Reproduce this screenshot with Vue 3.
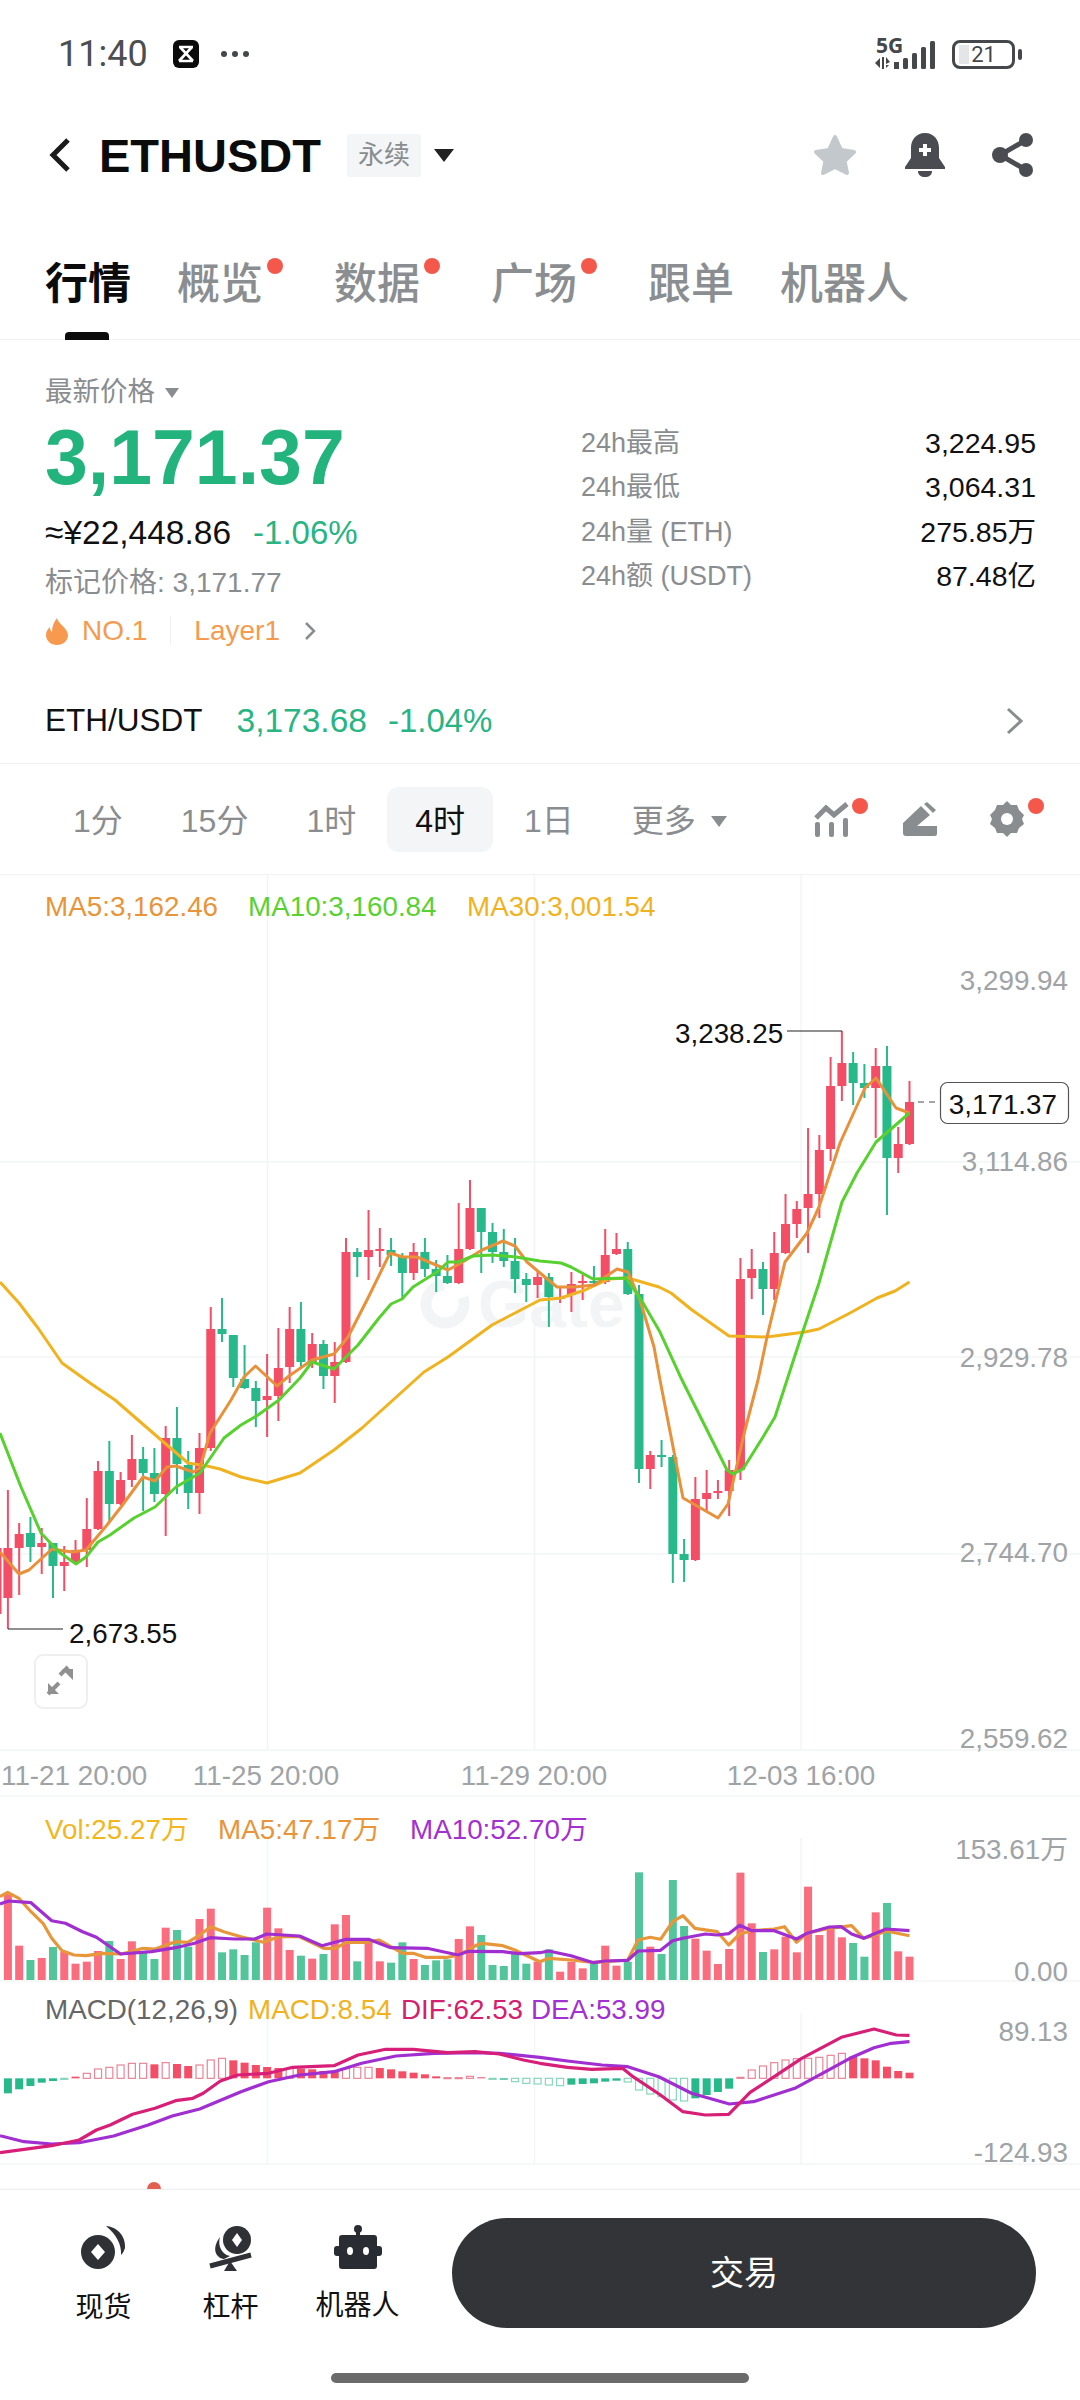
<template>
  <div class="page">
    <!-- status bar -->
    <div class="status">
      <span class="clock">11:40</span>
      <svg class="capcut" width="26" height="28" viewBox="0 0 26 28">
        <rect width="26" height="28" rx="6" fill="#0b0b0b" />
        <path d="M6 7h14M6 21h14M7 7l13 14M19 7L6 21" stroke="#fff" stroke-width="2.6" fill="none" />
      </svg>
      <span class="dots"><i></i><i></i><i></i></span>
      <div class="status-right">
        <svg class="signal" width="64" height="32" viewBox="0 0 64 32">
          <text class="net" x="1" y="15">5G</text>
          <path d="M0 25l5-5v10zM7 19h2v12H7zM11 19l4 5-4 2zM11 27h3l-3 3z" fill="#45474b" />
          <rect x="19" y="24" width="5" height="7" fill="#45474b" />
          <rect x="28" y="20" width="5" height="11" rx="1.5" fill="#45474b" />
          <rect x="37" y="15" width="5" height="16" rx="1.5" fill="#45474b" />
          <rect x="46" y="9" width="5" height="22" rx="1.5" fill="#45474b" />
          <rect x="55" y="3" width="5" height="28" rx="1.5" fill="#45474b" />
        </svg>
        <div class="battery"><b class="battery-fill"></b><span>21</span></div>
        <i class="battery-nub"></i>
      </div>
    </div>

    <!-- symbol header -->
    <div class="header">
      <svg class="back" width="24" height="36" viewBox="0 0 24 36">
        <path d="M20 3L5 18l15 15" stroke="#1b1b1b" stroke-width="5" fill="none" />
      </svg>
      <span class="symbol">ETHUSDT</span>
      <span class="tag">永续</span>
      <i class="tri tri-dark"></i>
      <div class="header-icons">
        <svg width="46" height="44" viewBox="0 0 46 44">
          <path d="M23 4l6 13 13 2-9.500 9 2.500 12-12-6-12 6 2.500-12L4 19l13-2z" fill="#c3c8cc" stroke="#c3c8cc" stroke-width="4" stroke-linejoin="round" />
        </svg>
        <svg width="40" height="44" viewBox="0 0 40 44">
          <path d="M20 0C11 0 6 7 6 15v10L0 34v2h40v-2l-6-9V15C34 7 29 0 20 0z" fill="#4a4c52" />
          <path d="M13 38h14c0 4-3 6-7 6s-7-2-7-6z" fill="#4a4c52" />
          <path d="M20 11v12M14 17h12" stroke="#fff" stroke-width="4" />
        </svg>
        <svg width="42" height="44" viewBox="0 0 42 44">
          <path d="M34 7L8 22l26 15" stroke="#4a4c52" stroke-width="5" fill="none" />
          <circle cx="34" cy="7" r="7" fill="#4a4c52" />
          <circle cx="8" cy="22" r="8" fill="#4a4c52" />
          <circle cx="34" cy="37" r="7" fill="#4a4c52" />
        </svg>
      </div>
    </div>

    <!-- section tabs -->
    <div class="tabs">
      <div v-for="t in tabs" :key="t.name" class="tab" :class="{ active: t.active, dotted: t.dot }">
        {{ t.name }}
        <i v-if="t.dot" class="tab-dot"></i>
      </div>
    </div>

    <!-- price block -->
    <div class="stats">
      <div class="stats-left">
        <div class="latest">最新价格 <i class="tri tri-small"></i></div>
        <div class="price">3,171.37</div>
        <div class="cny">≈¥22,448.86<span class="change">-1.06%</span></div>
        <div class="mark">标记价格: 3,171.77</div>
        <div class="rank">
          <svg width="24" height="27" viewBox="0 0 24 27">
            <path d="M12 0c1 6 10 9 11 17 0 6-5 10-11 10S1 23 1 17c0-4 2-6 4-8 0 3 1 4 2 5 0-6 2-10 5-14z" fill="#f7994f" />
          </svg>
          <span>NO.1</span>
          <i class="rank-line"></i>
          <span>Layer1</span>
          <svg class="rank-arrow" width="13" height="20" viewBox="0 0 13 20">
            <path d="M2 2l8 8-8 8" stroke="#8a8d90" stroke-width="2.500" fill="none" />
          </svg>
        </div>
      </div>
      <div class="stats-right">
        <div v-for="s in dayStats" :key="s.label" class="stat-row">
          <span class="stat-label">{{ s.label }}</span>
          <span class="stat-value">{{ s.value }}</span>
        </div>
      </div>
    </div>

    <!-- spot pair row -->
    <div class="pair">
      <span class="pair-name">ETH/USDT</span>
      <span class="pair-price">3,173.68</span>
      <span class="pair-change">-1.04%</span>
      <svg class="pair-arrow" width="18" height="28" viewBox="0 0 18 28">
        <path d="M2 2l13 12L2 26" stroke="#8a8d90" stroke-width="3" fill="none" />
      </svg>
    </div>

    <!-- period selector -->
    <div class="periods">
      <span v-for="p in periods" :key="p" class="period" :class="{ current: p === '4时' }">{{ p }}</span>
      <span class="period more">更多 <i class="tri tri-grey"></i></span>
      <div class="period-icons">
        <div class="icon-wrap">
          <svg width="36" height="36" viewBox="0 0 36 36">
            <path d="M2 17l10-10 8 7L33 3" stroke="#8a8d90" stroke-width="5" fill="none" />
            <rect x="1" y="21" width="5" height="15" rx="2" fill="#8a8d90" />
            <rect x="15" y="21" width="5" height="15" rx="2" fill="#8a8d90" />
            <rect x="29" y="17" width="5" height="19" rx="2" fill="#8a8d90" />
          </svg>
          <i class="badge"></i>
        </div>
        <svg width="34" height="34" viewBox="0 0 34 34">
          <path d="M0 21L18 4l9 9-13 11h20v8a2 2 0 0 1-2 2H3a3 3 0 0 1-3-3z" fill="#8a8d90" />
          <path d="M21 2l3-2 9 8-3 3z" fill="#8a8d90" />
        </svg>
        <div class="icon-wrap">
          <svg width="34" height="36" viewBox="0 0 34 36">
            <path d="M17 0l4 4h6l2 5 5 5-2 4 2 5-5 4-2 5h-6l-4 4-4-4H7l-2-5-5-4 2-5-2-4 5-5 2-5h6z" fill="#8a8d90" />
            <circle cx="17" cy="18" r="6" fill="#fff" />
          </svg>
          <i class="badge badge-gear"></i>
        </div>
      </div>
    </div>

    <!-- candlestick, volume and macd panes share one canvas in page coordinates -->
    <svg class="chart" width="1080" height="1315" viewBox="0 875 1080 1315">
      <g stroke="#f3f4f5" stroke-width="1.500">
        <line v-for="y in gridRows" :key="y" x1="0" x2="1080" :y1="y" :y2="y" />
        <template v-for="x in gridCols" :key="x">
          <line :x1="x" :x2="x" y1="875" y2="1750" />
          <line :x1="x" :x2="x" y1="1838" y2="1981" />
          <line :x1="x" :x2="x" y1="2013" y2="2164" />
        </template>
      </g>

      <!-- watermark -->
      <circle cx="445" cy="1304" r="19" fill="none" stroke="#f3f4f5" stroke-width="11" stroke-dasharray="95 24" transform="rotate(-20 445 1304)" />
      <text class="watermark" x="478" y="1327">Gate</text>

      <!-- candles -->
      <g v-for="c in candles" :key="c.i" :fill="c.fill">
        <rect :x="c.x - 1" :y="c.wickTop" width="2" :height="c.wickH" />
        <rect :x="c.x - 4.500" :y="c.top" width="9" :height="c.h" />
      </g>
      <rect x="0" y="1548" width="1.500" height="66" fill="#f44d66" />

      <polyline class="line" stroke="#f0b31f" :points="ma30" />
      <polyline class="line" stroke="#e8913a" :points="ma5" />
      <polyline class="line" stroke="#57d12f" :points="ma10" />

      <!-- price extremes -->
      <path d="M787 1031h55M8 1629h55" stroke="#222" stroke-width="1.200" fill="none" />
      <text class="t dark" x="675" y="1033">3,238.25</text>
      <text class="t dark" x="69" y="1633">2,673.55</text>
      <path d="M918 1102h18" stroke="#888" stroke-width="1.500" stroke-dasharray="6 5" />
      <rect x="940.500" y="1082.500" width="128" height="41" rx="7" fill="#fff" stroke="#555" stroke-width="1.200" />
      <text class="t dark end" x="1057" y="1104">3,171.37</text>

      <!-- expand button -->
      <rect x="35" y="1655" width="52" height="53" rx="8" fill="#fff" stroke="#efefef" stroke-width="2" />
      <path d="M60 1675l8-8M48 1694l11-11" stroke="#909090" stroke-width="4" />
      <path d="M62 1669h11v11zM48 1683v11h11z" fill="#909090" />

      <!-- legends -->
      <text class="t" x="45" y="906" fill="#e8953a">MA5:3,162.46</text>
      <text class="t" x="248" y="906" fill="#5ad132">MA10:3,160.84</text>
      <text class="t" x="467" y="906" fill="#f0b31f">MA30:3,001.54</text>

      <text v-for="a in axisLabels" :key="a.text" class="t end" x="1068" :y="a.y" fill="#a0a3a6">{{ a.text }}</text>
      <text v-for="d in dateLabels" :key="d.text" class="t" :class="d.cls" :x="d.x" y="1775" fill="#a0a3a6">{{ d.text }}</text>

      <!-- volume pane -->
      <text class="t" x="45" y="1829" fill="#f2b61f">Vol:25.27万</text>
      <text class="t" x="218" y="1829" fill="#e8953a">MA5:47.17万</text>
      <text class="t" x="410" y="1829" fill="#a330d0">MA10:52.70万</text>
      <rect v-for="b in volBars" :key="b.i" :x="b.x" :y="b.y" width="8" :height="b.h" :fill="b.fill" />
      <polyline class="line thick" stroke="#e8963a" :points="volMa5" />
      <polyline class="line thick" stroke="#a02ed0" :points="volMa10" />

      <!-- macd pane -->
      <text class="t" x="45" y="2009" fill="#666">MACD(12,26,9)</text>
      <text class="t" x="248" y="2009" fill="#f0b31f">MACD:8.54</text>
      <text class="t" x="401" y="2009" fill="#d4206f">DIF:62.53</text>
      <text class="t" x="531" y="2009" fill="#a330d0">DEA:53.99</text>
      <template v-for="b in macdBars" :key="b.i">
        <rect v-if="b.solid" :x="b.x" :y="b.y" width="8" :height="b.h" :fill="b.color" />
        <rect v-else :x="b.x + 0.500" :y="b.y" width="7" :height="b.h" fill="none" :stroke="b.edge" stroke-width="1.200" />
      </template>
      <polyline class="line thick" stroke="#a02ed0" :points="dea" />
      <polyline class="line thick" stroke="#d81f78" :points="dif" />

      <line x1="0" x2="1080" y1="2189.500" y2="2189.500" stroke="#eeeff0" stroke-width="1.500" />
      <path d="M147 2189a7 7 0 0 1 14 0z" fill="#e2604f" />
    </svg>

    <!-- bottom actions -->
    <div class="footer">
      <div class="actions">
        <div class="action">
          <svg width="46" height="46" viewBox="0 0 46 46">
            <circle cx="17" cy="27" r="17" fill="#2f3136" />
            <path d="M17 19l7 8-7 8-7-8z" fill="#fff" />
            <path d="M25 1c12 1 20 11 19 22-1 3-2 5-4 7 1-10-5-21-15-29z" fill="#2f3136" />
          </svg>
          <span>现货</span>
        </div>
        <div class="action">
          <svg width="46" height="46" viewBox="0 0 46 46">
            <circle cx="29" cy="15" r="14" fill="#2f3136" />
            <path d="M29 8l5 7-5 7-5-7z" fill="#fff" />
            <path d="M12 12c-1 3-1 7 0 10 2 5 5 8 10 9l-6 3C8 33 3 24 12 12z" fill="#2f3136" />
            <path d="M2 41l41-11" stroke="#2f3136" stroke-width="5" />
            <path d="M16 46l6-10 7 10z" fill="#2f3136" />
          </svg>
          <span>杠杆</span>
        </div>
        <div class="action">
          <svg width="48" height="44" viewBox="0 0 48 44">
            <circle cx="24" cy="4" r="4" fill="#2a2c33" />
            <rect x="22" y="6" width="4" height="6" fill="#2a2c33" />
            <rect x="5" y="10" width="38" height="34" rx="3" fill="#2a2c33" />
            <rect x="0" y="21" width="48" height="10" rx="3" fill="#2a2c33" />
            <ellipse cx="16" cy="26" rx="3" ry="4" fill="#fff" />
            <ellipse cx="32" cy="26" rx="3" ry="4" fill="#fff" />
          </svg>
          <span>机器人</span>
        </div>
        <div class="trade">交易</div>
      </div>
      <div class="home-bar"></div>
    </div>
  </div>
</template>

<script setup>
const tabs = [
  { name: '行情', active: true },
  { name: '概览', dot: true },
  { name: '数据', dot: true },
  { name: '广场', dot: true },
  { name: '跟单' },
  { name: '机器人' }
]

const dayStats = [
  { label: '24h最高', value: '3,224.95' },
  { label: '24h最低', value: '3,064.31' },
  { label: '24h量 (ETH)', value: '275.85万' },
  { label: '24h额 (USDT)', value: '87.48亿' }
]

const periods = ['1分', '15分', '1时', '4时', '1日']

const gridRows = [1162, 1357, 1554, 1750, 1796, 1981, 2164]
const gridCols = [267.5, 534.5, 801]

const axisLabels = [
  { text: '3,299.94', y: 980 },
  { text: '3,114.86', y: 1161 },
  { text: '2,929.78', y: 1357 },
  { text: '2,744.70', y: 1552 },
  { text: '2,559.62', y: 1738 },
  { text: '153.61万', y: 1849 },
  { text: '0.00', y: 1971 },
  { text: '89.13', y: 2031 },
  { text: '-124.93', y: 2152 }
]

const dateLabels = [
  { text: '11-21 20:00', x: 1 },
  { text: '11-25 20:00', x: 266, cls: 'mid' },
  { text: '11-29 20:00', x: 534, cls: 'mid' },
  { text: '12-03 16:00', x: 801, cls: 'mid' }
]

const candleX = (i) => 7.9 + 11.27 * i

// colour, wick top, body top, body bottom, wick bottom (page y)
const rawCandles = [
  ['r', 1490, 1548, 1598, 1629], ['r', 1523, 1534, 1548, 1595], ['g', 1517, 1533, 1547, 1562], ['r', 1528, 1543, 1547, 1574],
  ['g', 1543, 1543, 1566, 1598], ['r', 1546, 1562, 1566, 1591], ['r', 1540, 1550, 1562, 1563], ['r', 1498, 1529, 1550, 1567],
  ['r', 1461, 1471, 1529, 1530], ['g', 1441, 1471, 1504, 1522], ['r', 1472, 1480, 1504, 1505], ['r', 1435, 1459, 1480, 1487],
  ['g', 1447, 1459, 1473, 1511], ['g', 1448, 1473, 1494, 1502], ['r', 1426, 1438, 1494, 1536], ['g', 1407, 1438, 1464, 1494],
  ['g', 1451, 1465, 1493, 1509], ['r', 1433, 1448, 1493, 1514], ['r', 1307, 1329, 1448, 1451], ['g', 1298, 1329, 1334, 1342],
  ['g', 1335, 1335, 1378, 1387], ['g', 1345, 1379, 1388, 1389], ['g', 1381, 1388, 1401, 1427], ['r', 1354, 1396, 1400, 1437],
  ['r', 1328, 1368, 1396, 1421], ['r', 1307, 1329, 1367, 1383], ['g', 1302, 1329, 1362, 1368], ['r', 1333, 1344, 1362, 1368],
  ['g', 1340, 1344, 1376, 1389], ['r', 1342, 1362, 1376, 1403], ['r', 1238, 1252, 1362, 1363], ['g', 1248, 1252, 1257, 1277],
  ['r', 1210, 1250, 1257, 1280], ['r', 1228, 1249, 1250, 1267], ['g', 1238, 1250, 1255, 1266], ['g', 1253, 1257, 1273, 1300],
  ['r', 1243, 1252, 1273, 1280], ['g', 1238, 1252, 1269, 1277], ['g', 1260, 1269, 1276, 1292], ['g', 1255, 1276, 1283, 1284],
  ['r', 1203, 1249, 1283, 1284], ['r', 1180, 1208, 1249, 1250], ['g', 1208, 1208, 1232, 1273], ['g', 1223, 1232, 1252, 1263],
  ['g', 1229, 1252, 1261, 1267], ['g', 1238, 1261, 1279, 1293], ['g', 1273, 1279, 1285, 1302], ['r', 1270, 1277, 1285, 1298],
  ['g', 1273, 1277, 1297, 1327], ['r', 1288, 1297, 1299, 1303], ['r', 1272, 1284, 1295, 1312], ['r', 1275, 1281, 1283, 1300],
  ['g', 1266, 1281, 1283, 1286], ['r', 1229, 1255, 1282, 1284], ['r', 1233, 1249, 1254, 1255], ['g', 1242, 1249, 1294, 1295],
  ['g', 1285, 1294, 1469, 1483], ['r', 1451, 1455, 1469, 1489], ['g', 1440, 1455, 1457, 1467], ['g', 1455, 1457, 1554, 1583],
  ['g', 1539, 1554, 1560, 1582], ['r', 1477, 1499, 1560, 1561], ['r', 1470, 1493, 1499, 1512], ['r', 1480, 1491, 1493, 1499],
  ['r', 1460, 1470, 1491, 1516], ['r', 1258, 1279, 1470, 1480], ['r', 1249, 1269, 1278, 1299], ['g', 1262, 1269, 1289, 1315],
  ['r', 1232, 1253, 1289, 1300], ['r', 1194, 1224, 1253, 1254], ['r', 1201, 1209, 1224, 1238], ['r', 1128, 1194, 1208, 1253],
  ['r', 1135, 1150, 1194, 1218], ['r', 1057, 1086, 1149, 1161], ['r', 1031, 1063, 1086, 1101], ['g', 1052, 1063, 1083, 1105],
  ['g', 1064, 1083, 1088, 1098], ['r', 1048, 1066, 1088, 1138], ['g', 1046, 1066, 1158, 1215], ['r', 1127, 1144, 1158, 1173],
  ['r', 1081, 1102, 1144, 1145]
]

const candles = rawCandles.map((c, i) => ({
  i,
  x: candleX(i),
  fill: c[0] === 'r' ? '#f44d66' : '#27b98a',
  wickTop: c[1],
  wickH: c[4] - c[1],
  top: c[2],
  h: Math.max(c[3] - c[2], 2)
}))

const pts = (list) => list.map((p) => p.join(',')).join(' ')

const ma30 = pts([
  [0, 1282], [19, 1303], [38, 1328], [62, 1363], [90, 1383], [115, 1400], [160, 1439], [188, 1463], [207, 1466], [220, 1469],
  [241, 1477], [267, 1483], [300, 1473], [334, 1450], [362, 1428], [393, 1400], [424, 1372], [448, 1357], [492, 1325], [540, 1300],
  [561, 1298], [585, 1290], [609, 1279], [628, 1278], [659, 1287], [671, 1293], [692, 1310], [729, 1336], [767, 1337], [805, 1332],
  [819, 1329], [850, 1313], [877, 1298], [895, 1291], [909.5, 1282]
])

const ma5 = pts([
  [0, 1552], [19, 1574], [29, 1570], [52, 1549], [72, 1552], [86, 1550], [107, 1525], [121, 1507], [143, 1477], [155, 1481],
  [167, 1467], [176, 1466], [193, 1472], [200, 1468], [210, 1433], [231, 1400], [244, 1377], [255.5, 1366], [277, 1386], [289, 1376],
  [312, 1360], [334, 1354], [348, 1337], [368, 1298], [390, 1253], [403, 1257], [417, 1257], [448, 1270], [461, 1263], [482, 1250],
  [503, 1241], [515, 1246], [527, 1262], [540, 1273], [557, 1287], [574, 1287], [595, 1285], [605, 1277], [617, 1269], [628, 1272],
  [640, 1300], [654, 1347], [660, 1380], [683, 1498], [718, 1518], [728, 1504], [745, 1430], [758, 1380], [767, 1337], [785, 1262],
  [807, 1233], [819, 1207], [840, 1143], [865, 1088], [876, 1078], [896, 1108], [909.5, 1113]
])

const ma10 = pts([
  [0, 1433], [21, 1487], [41, 1533], [59, 1552], [76, 1564], [86, 1557], [98, 1542], [110, 1535], [134, 1518], [155, 1507],
  [176, 1487], [200, 1473], [224, 1438], [241, 1425], [258, 1415], [279, 1400], [300, 1378], [312, 1362], [334, 1369], [358, 1345],
  [379, 1318], [391, 1304], [402, 1299], [413, 1287], [437, 1272], [448, 1262], [458, 1262], [473, 1256], [492, 1255], [516, 1257],
  [540, 1261], [561, 1263], [571, 1267], [593, 1279], [626, 1278], [643, 1303], [660, 1332], [682, 1380], [727, 1470], [733, 1474],
  [743, 1469], [763, 1437], [775, 1417], [787, 1380], [800, 1340], [819, 1283], [842, 1202], [857, 1173], [876, 1142], [909.5, 1113]
])

// lower panes were read as offsets from y=1780 at 3x
const paneY = (v) => 1780 + v / 3
const left = (u) => u / 2.904
const right = (u) => 540 + u / 2.904
const trace = (a, b) => pts([
  ...a.map(([u, v]) => [+left(u).toFixed(1), +paneY(v).toFixed(1)]),
  ...b.map(([u, v]) => [+right(u).toFixed(1), +paneY(v).toFixed(1)])
])

const volTops = [
  340, 497, 540, 534, 501, 515, 551, 545, 513, 483, 537, 484, 515, 537, 443, 450, 500, 417, 386, 517, 508, 525, 487, 383, 445, 510, 527,
  536, 522, 433, 405, 544, 485, 544, 548, 487, 537, 555, 541, 538, 477, 439, 465, 555, 558, 522, 551, 545, 508, 575, 545, 565, 550, 497,
  557, 545, 277, 500, 522, 300, 438, 476, 512, 552, 507, 278, 430, 516, 508, 470, 517, 320, 465, 440, 472, 489, 530, 397, 369, 514, 530
]

const volBars = volTops.map((v, i) => ({
  i,
  x: candleX(i) - 4,
  y: paneY(v),
  h: 1980 - paneY(v),
  fill: rawCandles[i][0] === 'r' ? '#f96d7f' : '#52c59a'
}))

const volMa5 = trace(
  [[0, 350], [22, 337], [55, 355], [90, 395], [125, 430], [150, 475], [180, 512], [215, 525], [250, 527], [300, 520], [350, 522], [380, 515], [415, 505], [450, 507], [510, 485], [545, 487], [580, 465], [612, 440], [650, 455], [700, 470], [765, 487], [810, 470], [870, 470], [940, 505], [975, 505], [1005, 487], [1060, 487], [1100, 480], [1170, 520], [1200, 520], [1235, 532], [1300, 532], [1335, 525], [1385, 495], [1400, 490], [1460, 497], [1495, 510], [1568, 545]],
  [[25, 535], [90, 540], [155, 547], [190, 545], [255, 540], [285, 480], [320, 472], [350, 478], [385, 425], [415, 407], [450, 445], [515, 455], [548, 495], [580, 462], [615, 452], [680, 447], [710, 440], [745, 487], [775, 460], [840, 445], [905, 437], [940, 475], [975, 465], [1005, 453], [1073, 467]]
)

const volMa10 = trace(
  [[0, 372], [25, 363], [90, 368], [150, 422], [190, 430], [240, 455], [280, 472], [350, 522], [440, 515], [510, 503], [565, 490], [610, 473], [680, 477], [740, 477], [775, 462], [870, 468], [935, 497], [1005, 478], [1070, 478], [1135, 503], [1240, 505], [1330, 525], [1360, 514], [1460, 515], [1510, 521], [1568, 518]],
  [[25, 513], [90, 527], [155, 548], [190, 543], [255, 541], [285, 513], [350, 511], [385, 482], [415, 475], [480, 462], [515, 465], [548, 461], [580, 436], [615, 452], [680, 452], [745, 477], [775, 460], [840, 441], [875, 440], [905, 462], [940, 475], [1005, 447], [1073, 452]]
)

const macdEnds = [
  940, 928, 918, 908, 903, 897, 890, 880, 867, 862, 855, 850, 850, 853, 848, 852, 858, 855, 840, 835, 841, 848, 855, 861, 864, 866, 866,
  868, 873, 873, 866, 862, 862, 864, 868, 874, 878, 883, 889, 893, 893, 889, 892, 897, 899, 905, 910, 912, 915, 917, 914, 912, 910, 905,
  902, 906, 930, 942, 950, 960, 963, 955, 945, 936, 926, 892, 870, 858, 848, 840, 836, 835, 832, 826, 820, 830, 835, 841, 860, 873, 878
]
const hollowAt = new Set([5, 7, 8, 9, 10, 11, 12, 14, 17, 18, 19, 25, 30, 31, 32, 39, 40, 41, 43, 45, 46, 47, 48, 49, 55, 56, 57, 58, 59, 60, 65, 66, 67, 68, 69, 70, 71, 72, 73, 74])

const macdBars = macdEnds.map((v, i) => {
  const zero = paneY(895)
  const end = paneY(v)
  const down = v > 895
  return {
    i,
    x: candleX(i) - 4,
    y: Math.min(zero, end),
    h: Math.max(Math.abs(end - zero), 1),
    solid: !hollowAt.has(i),
    color: down ? '#27b98a' : '#f44d66',
    edge: down ? '#86d6b9' : '#e88597'
  }
})

const dif = trace(
  [[0, 1118], [150, 1097], [230, 1080], [280, 1050], [320, 1035], [385, 1003], [450, 985], [510, 962], [560, 955], [590, 940], [640, 903], [690, 885], [780, 880], [850, 862], [970, 857], [1040, 825], [1120, 808], [1200, 808], [1300, 818], [1380, 815], [1450, 822], [1520, 840], [1568, 850]],
  [[80, 862], [150, 868], [240, 865], [270, 890], [350, 945], [415, 995], [480, 1005], [548, 1003], [610, 937], [680, 890], [760, 835], [875, 772], [970, 747], [1035, 765], [1073, 766]]
)

const dea = trace(
  [[0, 1067], [70, 1085], [150, 1092], [230, 1088], [330, 1068], [430, 1035], [500, 1008], [580, 987], [700, 935], [780, 905], [870, 885], [970, 875], [1050, 850], [1150, 828], [1260, 820], [1380, 818], [1450, 820], [1568, 832]],
  [[80, 843], [180, 855], [255, 860], [345, 890], [440, 940], [550, 972], [620, 965], [740, 925], [820, 880], [900, 835], [970, 803], [1020, 790], [1073, 785]]
)
</script>

<style>
html,
body {
  margin: 0;
  background: #fff;
}
</style>

<style scoped>
.page {
  width: 1080px;
  height: 2400px;
  overflow: hidden;
  background: #fff;
  color: #111;
  font-family: "Liberation Sans", "Noto Sans CJK SC", sans-serif;
  display: flex;
  flex-direction: column;
}

i {
  display: block;
  font-style: normal;
}

/* status bar */
.status {
  height: 108px;
  display: flex;
  align-items: center;
  padding: 0 58px;
  box-sizing: border-box;
}

.clock {
  font-family: Roboto, sans-serif;
  font-size: 36px;
  color: #4c4e52;
}

.capcut {
  margin-left: 25px;
}

.dots {
  display: flex;
  gap: 5px;
  margin-left: 22px;
}

.dots i {
  width: 6px;
  height: 6px;
  border-radius: 50%;
  background: #45474b;
}

.status-right {
  margin-left: auto;
  margin-right: 0;
  display: flex;
  align-items: center;
  gap: 13px;
}

.signal {
  overflow: visible;
}

.net {
  font-family: "Noto Sans", sans-serif;
  font-weight: 700;
  font-size: 21px;
  fill: #45474b;
}

.battery {
  width: 63px;
  height: 29px;
  box-sizing: border-box;
  border: 3px solid #45474b;
  border-radius: 8px;
  position: relative;
  text-align: center;
  font-family: Roboto, sans-serif;
  font-size: 22px;
  line-height: 23px;
  color: #45474b;
}

.battery-fill {
  position: absolute;
  left: 4px;
  top: 2px;
  width: 10px;
  height: 19px;
  background: #e4e5e6;
}

.battery span {
  position: relative;
}

.battery-nub {
  width: 4px;
  height: 11px;
  margin-left: -10px;
  border-radius: 2px;
  background: #45474b;
}

/* symbol header */
.header {
  height: 94px;
  display: flex;
  align-items: center;
  padding: 0 46px 0 48px;
}

.back {
  width: 24px;
}

.symbol {
  margin-left: 27px;
  font-size: 47px;
  font-weight: 700;
  color: #0b0b0b;
}

.tag {
  margin-left: 26px;
  width: 74px;
  height: 43px;
  border-radius: 3px;
  background: #f3f5f6;
  color: #8a8d90;
  font-size: 26px;
  line-height: 43px;
  text-align: center;
}

.tri {
  width: 0;
  height: 0;
  border-style: solid;
  border-color: transparent;
}

.tri-dark {
  margin-left: 13px;
  border-width: 13px 10px 0;
  border-top-color: #222;
}

.tri-small {
  display: inline-block;
  margin-left: 2px;
  vertical-align: 3px;
  border-width: 10px 7px 0;
  border-top-color: #8a8d90;
}

.tri-grey {
  display: inline-block;
  margin-left: 6px;
  vertical-align: 5px;
  border-width: 11px 8px 0;
  border-top-color: #8a8d90;
}

.header-icons {
  margin-left: auto;
  display: flex;
  align-items: center;
  gap: 47px;
}

/* section tabs */
.tabs {
  height: 138px;
  box-sizing: border-box;
  padding: 57px 0 0 45px;
  display: flex;
  gap: 46px;
  border-bottom: 1px solid #f1f2f3;
}

.tab {
  position: relative;
  font-size: 43px;
  line-height: 50px;
  font-weight: 500;
  color: #8b8e91;
  height: 81px;
}

.tab.dotted {
  margin-right: 25px;
}

.tab.active {
  font-weight: 700;
  color: #0b0b0b;
}

.tab.active::after {
  content: '';
  position: absolute;
  left: 20px;
  bottom: 0;
  width: 44px;
  height: 8px;
  border-radius: 4px 4px 0 0;
  background: #0b0b0b;
}

.tab-dot {
  position: absolute;
  right: -20px;
  top: -1px;
  width: 16px;
  height: 16px;
  border-radius: 50%;
  background: #f4584a;
}

/* price block */
.stats {
  height: 338px;
  box-sizing: border-box;
  padding: 0 44px 0 45px;
  display: flex;
}

.stats-left {
  width: 537px;
  padding-top: 35px;
}

.latest {
  font-size: 27.500px;
  line-height: 34px;
  color: #8a8d90;
}

.price {
  margin-top: 8px;
  font-size: 77px;
  line-height: 80px;
  font-weight: 700;
  color: #23b47e;
}

.cny {
  margin-top: 16px;
  font-size: 33.500px;
  line-height: 40px;
  color: #111;
}

.change {
  margin-left: 22px;
  font-size: 33px;
  color: #28b483;
}

.mark {
  margin-top: 13px;
  font-size: 28px;
  line-height: 34px;
  color: #8a8d90;
}

.rank {
  margin-top: 14px;
  display: flex;
  align-items: center;
  font-size: 28px;
  line-height: 34px;
  color: #f59a4f;
}

.rank span:first-of-type {
  margin-left: 13px;
}

.rank-line {
  width: 1px;
  height: 30px;
  margin: 0 23px 0 23px;
  background: #f0f1f2;
}

.rank-arrow {
  margin-left: 24px;
}

.stats-right {
  flex: 1;
  padding-top: 81px;
  margin-left: -1px;
}

.stat-row {
  display: flex;
  justify-content: space-between;
  font-size: 27px;
  line-height: 44.300px;
}

.stat-label {
  color: #8a8d90;
}

.stat-value {
  font-size: 28.500px;
  color: #111;
}

/* spot pair */
.pair {
  height: 86px;
  box-sizing: border-box;
  padding: 0 56px 0 45px;
  display: flex;
  align-items: center;
  border-bottom: 1px solid #f1f2f3;
}

.pair-name {
  font-size: 31.500px;
}

.pair-price {
  margin-left: 34px;
  font-size: 33.500px;
  color: #28b483;
}

.pair-change {
  margin-left: 21px;
  font-size: 33px;
  color: #28b483;
}

.pair-arrow {
  margin-left: auto;
}

/* periods */
.periods {
  height: 111px;
  box-sizing: border-box;
  padding: 0 56px 0 46px;
  display: flex;
  align-items: center;
  gap: 4px;
  border-bottom: 1px solid #f1f2f3;
}

.period {
  height: 65px;
  padding: 0 27px;
  border-radius: 12px;
  font-size: 32px;
  line-height: 68px;
  color: #8a8d90;
  white-space: nowrap;
}

.period.current {
  padding: 0 28px;
  background: #f3f5f6;
  color: #111;
}

.period-icons {
  margin-left: auto;
  display: flex;
  align-items: center;
  gap: 53px;
}

.icon-wrap {
  position: relative;
  display: flex;
}

.badge {
  position: absolute;
  right: -18px;
  top: -3px;
  width: 16px;
  height: 16px;
  border-radius: 50%;
  background: #f4584a;
}

.badge-gear {
  right: -20px;
}

/* chart */
.chart {
  display: block;
  flex: none;
}

.t {
  font-size: 27.800px;
  dominant-baseline: central;
}

.dark {
  fill: #111;
}

.end {
  text-anchor: end;
}

.mid {
  text-anchor: middle;
}

.watermark {
  font-size: 66px;
  font-weight: 700;
  fill: #f3f4f5;
}

.line {
  fill: none;
  stroke-width: 3;
  stroke-linejoin: round;
}

.line.thick {
  stroke-width: 3.200;
}

/* footer */
.footer {
  flex: 1;
  padding-top: 28px;
}

.actions {
  height: 110px;
  display: flex;
  padding: 0 44px 0 40px;
}

.action {
  width: 127px;
  display: flex;
  flex-direction: column;
  align-items: center;
  padding-top: 7px;
  box-sizing: border-box;
  font-size: 28px;
  line-height: 34px;
  color: #111;
}

.action span {
  margin-top: 20px;
}

.trade {
  margin-left: 31px;
  width: 584px;
  height: 110px;
  border-radius: 55px;
  background: #323438;
  color: #fff;
  font-size: 34px;
  line-height: 110px;
  text-align: center;
}

.home-bar {
  width: 418px;
  height: 10px;
  margin: 45px auto 0;
  border-radius: 5px;
  background: #6b6b6b;
}
</style>
